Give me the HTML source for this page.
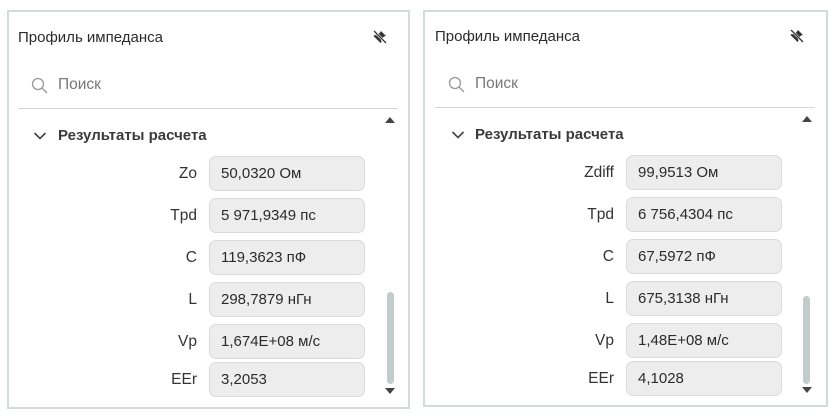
<!DOCTYPE html>
<html><head><meta charset="utf-8"><style>
body{margin:0;width:830px;height:415px;background:#fff;position:relative;overflow:hidden;font-family:"Liberation Sans",sans-serif;color:#333}
.p{position:absolute;border:2px solid #d3dcdb;box-sizing:border-box;background:#fff;overflow:hidden}
.a{position:absolute}
.t{font-size:15px;color:#2b2b2b}
.s{font-size:15.5px;color:#777}
.hr{height:1px;background:#cfd6d5}
.b{font-size:15px;font-weight:bold;color:#3a3a3a}
.lb{font-size:15.5px;color:#333;text-align:right;width:80px}
.f{height:35px;border:1px solid #d8dcdb;border-radius:7px;background:#ecedec;box-sizing:border-box;font-size:15px;line-height:33px;padding-left:11px;color:#2b2b2b;white-space:nowrap}
.sb{width:7px;border-radius:4px;background:#c2cccb}
.up{width:0;height:0;border-left:5px solid transparent;border-right:5px solid transparent;border-bottom:6px solid #444}
.dn{width:0;height:0;border-left:5px solid transparent;border-right:5px solid transparent;border-top:6px solid #444}
</style></head><body>

<div class="p" style="left:7px;top:10px;width:403px;height:399px"></div>
<div class="p" style="left:423px;top:10px;width:405px;height:397px"></div>

<!-- left -->
<div class="a t" style="left:18px;top:29px">Профиль импеданса</div>
<svg class="a" style="left:372px;top:29px" width="16" height="16" viewBox="0 0 16 16"><path d="M9 2l5 5-2 0.5-3 3 0.5 2.5-1 1-7-7 1-1 2.5 0.5 3-3z" fill="#333"/><path d="M2 2l12 12" stroke="#fff" stroke-width="2.4"/><path d="M2 2l12 12" stroke="#333" stroke-width="1.3"/></svg>
<svg class="a" style="left:31px;top:77px" width="18" height="18" viewBox="0 0 18 18"><circle cx="7" cy="7" r="5.5" fill="none" stroke="#999" stroke-width="1.3"/><path d="M11 11l5 5" stroke="#999" stroke-width="1.3"/></svg>
<div class="a s" style="left:58px;top:76px">Поиск</div>
<div class="a hr" style="left:18px;top:108px;width:380px"></div>
<div class="a up" style="left:385px;top:117px"></div>
<svg class="a" style="left:33px;top:131px" width="14" height="10" viewBox="0 0 14 10"><path d="M1.5 2l5.5 5.5 5.5-5.5" fill="none" stroke="#444" stroke-width="1.6"/></svg>
<div class="a b" style="left:58px;top:127px">Результаты расчета</div>
<div class="a lb" style="left:117px;top:165px">Zo</div><div class="a f" style="left:209px;top:156px;width:156px">50,0320 Ом</div>
<div class="a lb" style="left:117px;top:207px">Tpd</div><div class="a f" style="left:209px;top:198px;width:156px">5 971,9349 пс</div>
<div class="a lb" style="left:117px;top:249px">C</div><div class="a f" style="left:209px;top:240px;width:156px">119,3623 пФ</div>
<div class="a lb" style="left:117px;top:291px">L</div><div class="a f" style="left:209px;top:282px;width:156px">298,7879 нГн</div>
<div class="a lb" style="left:117px;top:333px">Vp</div><div class="a f" style="left:209px;top:324px;width:156px">1,674E+08 м/с</div>
<div class="a lb" style="left:117px;top:371px">EEr</div><div class="a f" style="left:209px;top:362px;width:156px">3,2053</div>
<div class="a sb" style="left:387px;top:292px;height:92px"></div>
<div class="a dn" style="left:385px;top:388px"></div>

<!-- right -->
<div class="a t" style="left:435px;top:28px">Профиль импеданса</div>
<svg class="a" style="left:789px;top:28px" width="16" height="16" viewBox="0 0 16 16"><path d="M9 2l5 5-2 0.5-3 3 0.5 2.5-1 1-7-7 1-1 2.5 0.5 3-3z" fill="#333"/><path d="M2 2l12 12" stroke="#fff" stroke-width="2.4"/><path d="M2 2l12 12" stroke="#333" stroke-width="1.3"/></svg>
<svg class="a" style="left:448px;top:76px" width="18" height="18" viewBox="0 0 18 18"><circle cx="7" cy="7" r="5.5" fill="none" stroke="#999" stroke-width="1.3"/><path d="M11 11l5 5" stroke="#999" stroke-width="1.3"/></svg>
<div class="a s" style="left:475px;top:75px">Поиск</div>
<div class="a hr" style="left:435px;top:107px;width:380px"></div>
<div class="a up" style="left:802px;top:116px"></div>
<svg class="a" style="left:451px;top:130px" width="14" height="10" viewBox="0 0 14 10"><path d="M1.5 2l5.5 5.5 5.5-5.5" fill="none" stroke="#444" stroke-width="1.6"/></svg>
<div class="a b" style="left:475px;top:126px">Результаты расчета</div>
<div class="a lb" style="left:534px;top:164px">Zdiff</div><div class="a f" style="left:626px;top:155px;width:156px">99,9513 Ом</div>
<div class="a lb" style="left:534px;top:206px">Tpd</div><div class="a f" style="left:626px;top:197px;width:156px">6 756,4304 пс</div>
<div class="a lb" style="left:534px;top:248px">C</div><div class="a f" style="left:626px;top:239px;width:156px">67,5972 пФ</div>
<div class="a lb" style="left:534px;top:290px">L</div><div class="a f" style="left:626px;top:281px;width:156px">675,3138 нГн</div>
<div class="a lb" style="left:534px;top:332px">Vp</div><div class="a f" style="left:626px;top:323px;width:156px">1,48E+08 м/с</div>
<div class="a lb" style="left:534px;top:370px">EEr</div><div class="a f" style="left:626px;top:361px;width:156px">4,1028</div>
<div class="a sb" style="left:803px;top:296px;height:88px"></div>
<div class="a dn" style="left:802px;top:387px"></div>
</body></html>
